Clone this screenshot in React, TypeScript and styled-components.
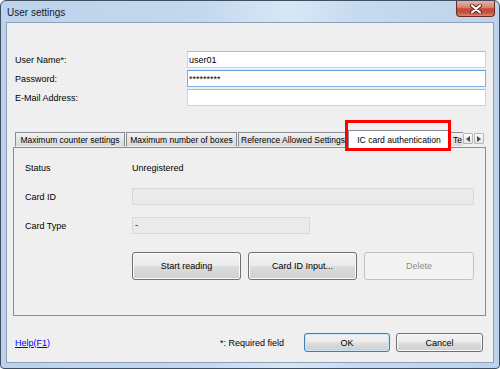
import React from 'react';
import styled, { createGlobalStyle } from 'styled-components';

const GlobalStyle = createGlobalStyle`
  html, body {
    margin: 0;
    padding: 0;
    background: #ffffff;
  }
  body {
    font-family: "Liberation Sans", Arial, sans-serif;
    color: #000;
  }
  * {
    box-sizing: border-box;
  }
`;

const Window = styled.div`
  width: 500px;
  height: 369px;
  border: 1px solid #3f4e61;
  border-radius: 6px 6px 4px 4px;
  background: linear-gradient(
    90deg,
    #bdd3eb 0%,
    #c3d8ee 40%,
    #d8e7f6 58%,
    #c6daef 72%,
    #bcd3eb 100%
  );
  padding: 0 5px 5px;
  display: flex;
  flex-direction: column;
  overflow: hidden;
`;

const TitleBar = styled.div`
  height: 21px;
  display: flex;
  align-items: flex-start;
  justify-content: space-between;
`;

const Title = styled.span`
  font-size: 10px;
  line-height: 12px;
  color: #14202e;
  padding: 6px 0 0 1px;
`;

const CloseButton = styled.div`
  width: 39px;
  height: 16px;
  margin-right: -1px;
  border: 1px solid #6b2a21;
  border-top: none;
  border-radius: 0 0 4px 4px;
  background: linear-gradient(
    #eab1a3 0%,
    #d98473 42%,
    #c4493a 52%,
    #c6503c 78%,
    #dc8a70 100%
  );
  display: flex;
  align-items: center;
  justify-content: center;
`;

const Client = styled.div`
  flex: 1;
  border: 1px solid #8ba1bc;
  background: #f0eff0;
  padding: 28px 7px 0 6px;
  display: flex;
  flex-direction: column;
`;

const FormGrid = styled.div`
  display: grid;
  grid-template-columns: 172px 1fr;
  row-gap: 2px;
  margin-left: 2px;
  align-items: center;
`;

const FieldLabel = styled.label`
  font-size: 9px;
`;

const TextInput = styled.input<{ $focused?: boolean }>`
  height: 17px;
  width: 100%;
  margin: 0;
  padding: 0 0 0 1px;
  font: 9px "Liberation Sans", Arial, sans-serif;
  color: #000;
  background: #ffffff;
  border: 1px solid ${({ $focused }) => ($focused ? '#7fb2e3' : '#d3d4d8')};
  border-top-color: ${({ $focused }) => ($focused ? '#5c9ad8' : '#b7b9bf')};
  outline: none;
`;

const TabControl = styled.div`
  margin-top: 24px;
  display: flex;
  flex-direction: column;
`;

const TabStrip = styled.div`
  height: 17px;
  display: flex;
  align-items: flex-end;
  position: relative;
  z-index: 1;
`;

const TabsViewport = styled.div`
  flex: 1;
  height: 18px;
  display: flex;
  align-items: flex-start;
  padding-left: 2px;
  overflow: hidden;
  align-self: flex-start;
`;

const Tab = styled.div<{ $width: number; $active?: boolean; $left?: boolean }>`
  flex: none;
  width: ${({ $width }) => $width}px;
  height: ${({ $active }) => ($active ? 18 : 15)}px;
  margin-top: ${({ $active }) => ($active ? 0 : 2)}px;
  margin-right: ${({ $active }) => ($active ? 0 : 1)}px;
  border: 1px solid #898c95;
  border-bottom: ${({ $active }) => ($active ? 'none' : '1px solid transparent')};
  background: ${({ $active }) =>
    $active ? '#ffffff' : 'linear-gradient(#f3f3f3, #e3e3e3 50%, #dadada)'};
  font-size: ${({ $active }) => ($active ? 8.6 : 8.5)}px;
  display: flex;
  align-items: center;
  justify-content: ${({ $left }) => ($left ? 'flex-start' : 'center')};
  padding-left: ${({ $left }) => ($left ? 2 : 0)}px;
  white-space: nowrap;
  overflow: hidden;
`;

// red annotation frame drawn over the selected tab
const Highlight = styled.div`
  position: absolute;
  left: 332px;
  top: -10px;
  width: 106px;
  height: 31px;
  border: 3px solid #ff0000;
  pointer-events: none;
`;

const ScrollArrows = styled.div`
  display: flex;
  gap: 1px;
  margin: 0 2px 3px 0;
  align-self: flex-end;
`;

const ArrowButton = styled.div`
  width: 10px;
  height: 11px;
  border: 1px solid #b4b6ba;
  border-radius: 1px;
  background: linear-gradient(#fafafa, #e6e6e6);
  display: flex;
  align-items: center;
  justify-content: center;
`;

const TabPanel = styled.div`
  height: 169px;
  border: 1px solid #898c95;
  background: #f0eff0;
  padding: 11px 11px 0 11px;
  display: grid;
  grid-template-columns: 107px 1fr;
  grid-auto-rows: 17px;
  row-gap: 12px;
  align-items: center;
  align-content: start;
`;

const PanelText = styled.span`
  font-size: 9px;
`;

const ReadOnlyField = styled.div<{ $width?: number }>`
  height: 17px;
  width: ${({ $width }) => ($width ? `${$width}px` : '100%')};
  border: 1px solid #d8d8da;
  background: #ebeaeb;
  font-size: 9px;
  line-height: 15px;
  padding-left: 2px;
`;

const ButtonRow = styled.div`
  grid-column: 2;
  display: flex;
  gap: 7px;
  margin-top: 6px;
  align-self: start;
`;

const Button = styled.button<{ $width: number; $height: number; $default?: boolean }>`
  width: ${({ $width }) => $width}px;
  height: ${({ $height }) => $height}px;
  margin: 0;
  padding: 0;
  flex: none;
  font: 9px "Liberation Sans", Arial, sans-serif;
  color: #000;
  border: 1px solid ${({ $default }) => ($default ? '#3c7fb1' : '#707070')};
  border-radius: 3px;
  background: linear-gradient(#f2f2f2 0%, #ebebeb 48%, #dddddd 52%, #cfcfcf 100%);
  box-shadow: inset 0 0 0 1px ${({ $default }) => ($default ? '#c9e6f7' : '#fbfbfb')};

  &:disabled {
    color: #8d8d8d;
    border-color: #bfc2c4;
    background: #f3f3f3;
    box-shadow: none;
  }
`;

const BottomBar = styled.div`
  margin-top: 17px;
  display: flex;
  align-items: center;
  padding-left: 2px;
`;

const HelpLink = styled.a`
  font-size: 9px;
  color: #0000ff;
  text-decoration: underline;
`;

const Spacer = styled.div`
  flex: 1;
`;

const RequiredNote = styled.span`
  font-size: 9px;
  margin-right: 20px;
`;

const DialogButtons = styled.div`
  display: flex;
  gap: 6px;
  margin-right: 3px;
`;

const CloseGlyph = () => (
  <svg width="14" height="10" viewBox="0 0 14 10">
    <path d="M3 1.5 L11 8.5 M11 1.5 L3 8.5" stroke="#5a2018" strokeWidth="4" strokeLinecap="round" />
    <path d="M3 1.5 L11 8.5 M11 1.5 L3 8.5" stroke="#ffffff" strokeWidth="2.2" strokeLinecap="round" />
  </svg>
);

const Arrow = ({ dir }: { dir: 'left' | 'right' }) => (
  <svg width="4" height="6" viewBox="0 0 4 6">
    <path d={dir === 'left' ? 'M4 0 L0 3 L4 6 Z' : 'M0 0 L4 3 L0 6 Z'} fill="#4a4a4a" />
  </svg>
);

export default function App() {
  return (
    <>
      <GlobalStyle />
      <Window>
        <TitleBar>
          <Title>User settings</Title>
          <CloseButton>
            <CloseGlyph />
          </CloseButton>
        </TitleBar>

        <Client>
          <FormGrid>
            <FieldLabel>User Name*:</FieldLabel>
            <TextInput readOnly defaultValue="user01" />
            <FieldLabel>Password:</FieldLabel>
            <TextInput $focused readOnly defaultValue="*********" />
            <FieldLabel>E-Mail Address:</FieldLabel>
            <TextInput readOnly defaultValue="" />
          </FormGrid>

          <TabControl>
            <TabStrip>
              <TabsViewport>
                <Tab $width={110}>Maximum counter settings</Tab>
                <Tab $width={111}>Maximum number of boxes</Tab>
                <Tab $width={109} $left>Reference Allowed Settings</Tab>
                <Tab $width={102} $active>IC card authentication</Tab>
                <Tab $width={20} $left>Te</Tab>
              </TabsViewport>
              <ScrollArrows>
                <ArrowButton>
                  <Arrow dir="left" />
                </ArrowButton>
                <ArrowButton>
                  <Arrow dir="right" />
                </ArrowButton>
              </ScrollArrows>
              <Highlight />
            </TabStrip>

            <TabPanel>
              <PanelText>Status</PanelText>
              <PanelText>Unregistered</PanelText>
              <PanelText>Card ID</PanelText>
              <ReadOnlyField />
              <PanelText>Card Type</PanelText>
              <ReadOnlyField $width={178}>-</ReadOnlyField>
              <ButtonRow>
                <Button $width={109} $height={28}>Start reading</Button>
                <Button $width={109} $height={28}>Card ID Input...</Button>
                <Button $width={110} $height={28} disabled>
                  Delete
                </Button>
              </ButtonRow>
            </TabPanel>
          </TabControl>

          <BottomBar>
            <HelpLink href="#">Help(F1)</HelpLink>
            <Spacer />
            <RequiredNote>*: Required field</RequiredNote>
            <DialogButtons>
              <Button $width={86} $height={19} $default>
                OK
              </Button>
              <Button $width={87} $height={19}>Cancel</Button>
            </DialogButtons>
          </BottomBar>
        </Client>
      </Window>
    </>
  );
}
